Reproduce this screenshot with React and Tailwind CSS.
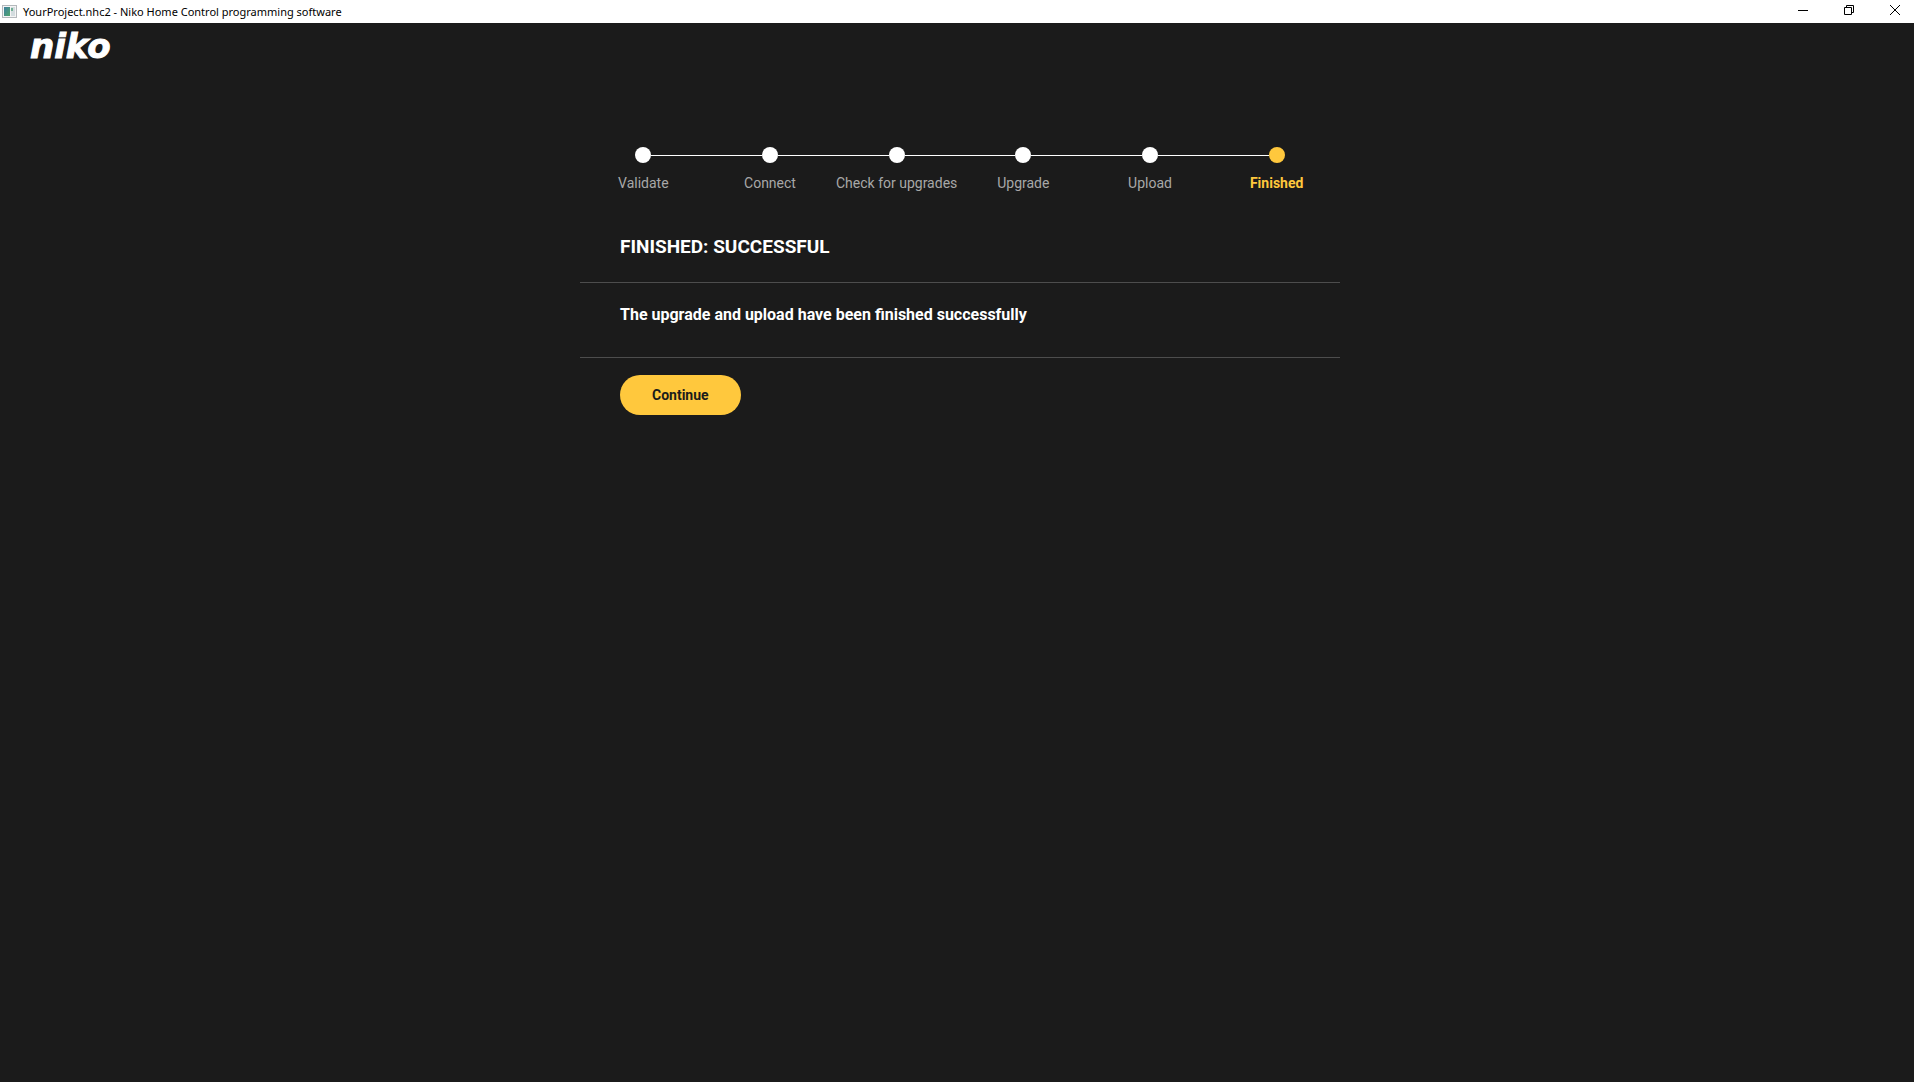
/**
 * UpgradeFinished: last screen of the upgrade and upload wizard.
 *
 * Light title bar on top, dark page with the brand, the step indicator
 * and the result of the run below it.
 */
import clsx from "clsx";

const STEPS = [
  "Validate",
  "Connect",
  "Check for upgrades",
  "Upgrade",
  "Upload",
  "Finished",
];

const CURRENT_STEP = STEPS.length - 1;

function AppIcon() {
  return (
    <svg viewBox="0 0 15 13" className="h-[13px] w-[15px] shrink-0" aria-hidden="true">
      <defs>
        <linearGradient id="app-pane" x1="0" y1="0" x2="1" y2="1">
          <stop offset="0" stopColor="#3f7fa0" />
          <stop offset="1" stopColor="#4fa56c" />
        </linearGradient>
      </defs>
      <rect x="0.5" y="0.5" width="14" height="12" fill="#f4f4f4" stroke="#b4b8bc" />
      <rect x="2" y="2" width="6" height="9" fill="url(#app-pane)" />
      <rect x="9" y="2" width="4" height="9" fill="#d3dcdf" />
      <rect x="9" y="3" width="2" height="3" fill="#6fae93" />
    </svg>
  );
}

function WindowButton({ label, children }) {
  return (
    <button
      type="button"
      aria-label={label}
      className="flex w-[18px] items-center justify-center hover:bg-neutral-200"
    >
      <svg
        viewBox="0 0 10 10"
        className="size-[10px]"
        fill="none"
        stroke="#000000"
        aria-hidden="true"
      >
        {children}
      </svg>
    </button>
  );
}

function TitleBar() {
  return (
    <header className="flex h-[23px] items-stretch bg-white text-black">
      <div className="flex flex-1 items-center gap-[6px] pl-[2px]">
        <AppIcon />
        <span className="font-['Noto_Sans',sans-serif] text-[11px] leading-4 whitespace-nowrap">
          YourProject.nhc2 - Niko Home Control programming software
        </span>
      </div>
      <div className="flex h-5 shrink-0 gap-7 pr-[10px]">
        <WindowButton label="Minimize">
          <path d="M0 5.5H10" />
        </WindowButton>
        <WindowButton label="Restore">
          <path d="M0.5 2.5H7.5V9.5H0.5ZM2.5 2.5V0.5H9.5V7.5H7.5" />
        </WindowButton>
        <WindowButton label="Close">
          <path d="M0 0L10 10M10 0L0 10" />
        </WindowButton>
      </div>
    </header>
  );
}

function Stepper() {
  return (
    <ol className="grid grid-cols-6">
      {STEPS.map((step, i) => {
        const current = i === CURRENT_STEP;
        return (
          <li
            key={step}
            aria-current={current ? "step" : undefined}
            className="flex flex-col items-center gap-3"
          >
            <div className="flex w-full items-start">
              <span className={clsx("mt-2 h-px flex-1", i > 0 && "bg-white")} />
              <span
                className={clsx(
                  "size-4 shrink-0 rounded-full",
                  current ? "bg-[#ffc83d]" : "bg-white"
                )}
              />
              <span className={clsx("mt-2 h-px flex-1", !current && "bg-white")} />
            </div>
            <span
              className={clsx(
                "text-[14px] leading-4 whitespace-nowrap",
                current ? "font-bold text-[#ffc83d]" : "text-[#a8a8a8]"
              )}
            >
              {step}
            </span>
          </li>
        );
      })}
    </ol>
  );
}

export default function App() {
  return (
    <div className="flex min-h-screen flex-col bg-[#1b1b1b] font-[Roboto,sans-serif] text-white">
      <TitleBar />
      <div className="flex h-[46px] items-center px-[30px]">
        <span className="font-['DejaVu_Sans',sans-serif] text-[34px] leading-[46px] font-bold italic [-webkit-text-stroke:1px_white]">
          niko
        </span>
      </div>
      <div className="pt-[78px] pl-[6px]">
        <main className="mx-auto w-full max-w-[760px]">
          <Stepper />
          <h1 className="border-b border-[#4d4d4d] px-10 pt-11 pb-[23px] text-[19px] leading-6 font-bold">
            FINISHED: SUCCESSFUL
          </h1>
          <p className="border-b border-[#4d4d4d] px-10 pt-5 pb-[30px] text-[16px] leading-6 font-bold">
            The upgrade and upload have been finished successfully
          </p>
          <div className="px-10 pt-[17px]">
            <button
              type="button"
              className="h-10 rounded-full bg-[#ffc83d] px-8 text-[14px] leading-5 font-bold text-[#1b1b1b] hover:bg-[#ffd466]"
            >
              Continue
            </button>
          </div>
        </main>
      </div>
    </div>
  );
}
